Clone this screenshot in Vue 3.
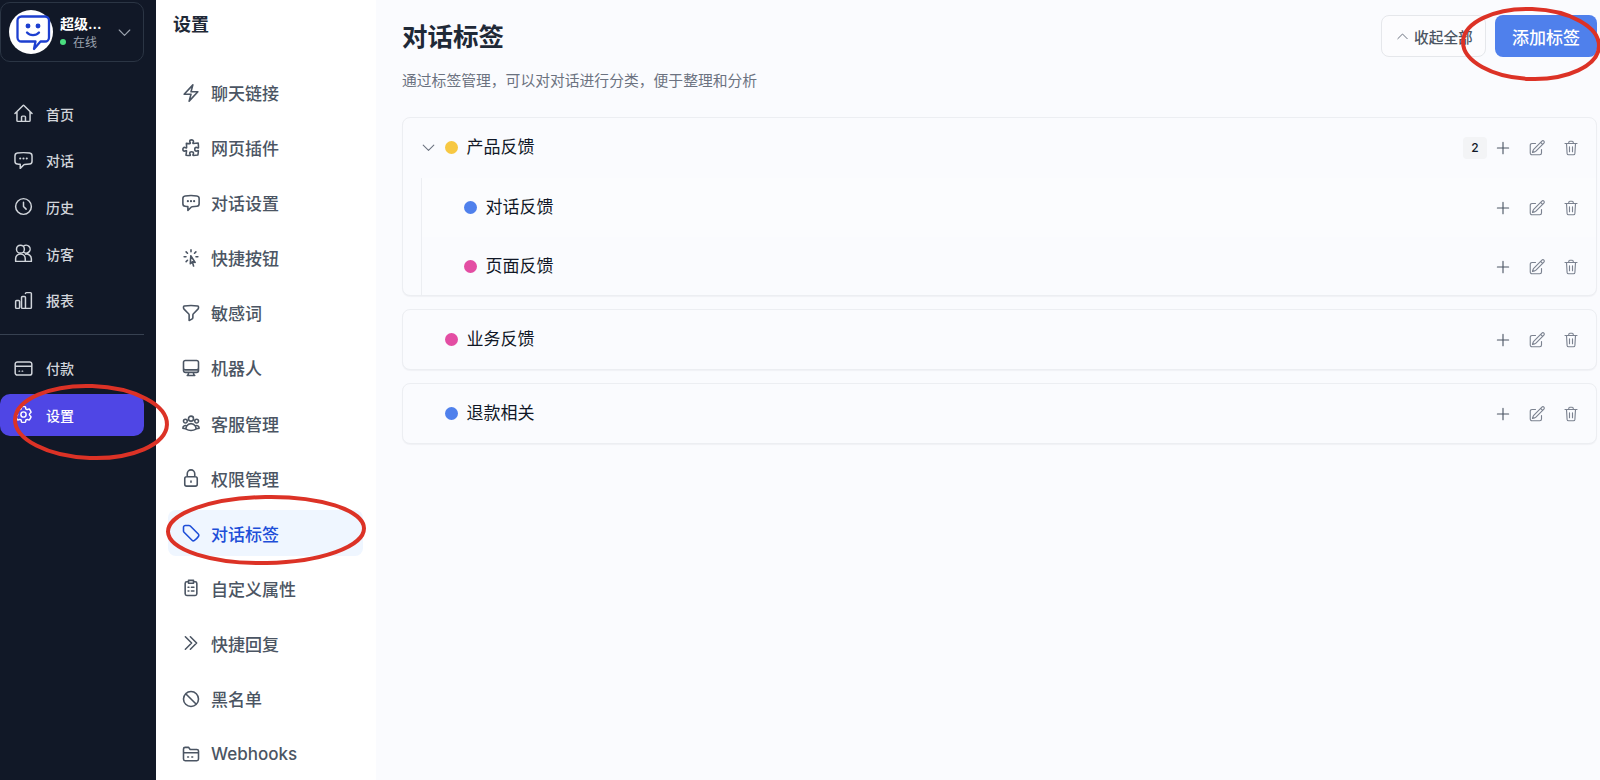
<template>
  <div class="app">
    <aside class="rail">
      <div class="account">
        <div class="avatar">
          <svg viewBox="0 0 44 44" width="44" height="44" fill="none" stroke="#1d3fd0" stroke-width="2.300" stroke-linecap="round" stroke-linejoin="round">
            <path d="M12.500 6.500h23.500a4 4 0 0 1 4 4v17a4 4 0 0 1-4 4h-4.500l-6.500 7.500 1.500-7.500H12.500a4 4 0 0 1-4-4v-17a4 4 0 0 1 4-4Z" />
            <path d="M18 22.500c3 3.500 9 3.500 12 0" />
            <circle cx="19" cy="16" r="1.300" fill="#1d3fd0" />
            <circle cx="29" cy="16" r="1.300" fill="#1d3fd0" />
          </svg>
        </div>
        <div class="account-text">
          <div class="account-name">超级...</div>
          <div class="account-status"><i class="online"></i>在线</div>
        </div>
        <svg class="account-arrow" viewBox="0 0 24 24" width="17" height="17" fill="none" stroke="currentColor" stroke-width="1.6" stroke-linecap="round" stroke-linejoin="round"><path :d="icons.chevronDown" /></svg>
      </div>

      <nav class="rail-nav">
        <a v-for="item in railTop" :key="item.label" class="rail-item">
          <svg viewBox="0 0 24 24" width="21" height="21" fill="none" stroke="currentColor" stroke-width="1.7" stroke-linecap="round" stroke-linejoin="round"><path :d="icons[item.icon]" /></svg>
          <span>{{ item.label }}</span>
        </a>
      </nav>
      <div class="rail-divider"></div>
      <nav class="rail-nav rail-nav-bottom">
        <a v-for="item in railBottom" :key="item.label" class="rail-item" :class="{ active: item.active }">
          <svg viewBox="0 0 24 24" width="21" height="21" fill="none" stroke="currentColor" stroke-width="1.7" stroke-linecap="round" stroke-linejoin="round"><path :d="icons[item.icon]" /></svg>
          <span>{{ item.label }}</span>
        </a>
      </nav>
    </aside>

    <aside class="settings">
      <div class="settings-title">设置</div>
      <nav class="settings-nav">
        <a v-for="item in settingsMenu" :key="item.label" class="settings-item" :class="{ active: item.active }">
          <svg viewBox="0 0 24 24" width="20" height="20" fill="none" stroke="currentColor" stroke-width="1.9" stroke-linecap="round" stroke-linejoin="round"><path :d="icons[item.icon]" /></svg>
          <span>{{ item.label }}</span>
        </a>
      </nav>
    </aside>

    <main class="content">
      <header class="content-head">
        <div>
          <h1>对话标签</h1>
          <p>通过标签管理，可以对对话进行分类，便于整理和分析</p>
        </div>
        <div class="head-actions">
          <button class="btn-ghost">
            <svg viewBox="0 0 24 24" width="15" height="15" fill="none" stroke="#6b7280" stroke-width="1.6" stroke-linecap="round" stroke-linejoin="round"><path :d="icons.chevronUp" /></svg>
            收起全部
          </button>
          <button class="btn-primary">添加标签</button>
        </div>
      </header>

      <section v-for="tag in tags" :key="tag.name" class="tag-card">
        <div class="tag-row">
          <span class="tag-toggle">
            <svg v-if="tag.children" viewBox="0 0 24 24" width="17" height="17" fill="none" stroke="#6b7280" stroke-width="1.5" stroke-linecap="round" stroke-linejoin="round"><path :d="icons.chevronDown" /></svg>
          </span>
          <i class="dot" :style="{ background: tag.color }"></i>
          <span class="tag-name">{{ tag.name }}</span>
          <span v-if="tag.children" class="tag-count">{{ tag.children.length }}</span>
          <div class="row-actions">
            <svg v-for="a in rowActions" :key="a" viewBox="0 0 24 24" width="18" height="18" fill="none" :stroke="a === 'plus' ? '#4b5563' : '#7b8290'" stroke-width="1.5" stroke-linecap="round" stroke-linejoin="round"><path :d="icons[a]" /></svg>
          </div>
        </div>
        <div v-if="tag.children" class="tag-children">
          <div v-for="child in tag.children" :key="child.name" class="tag-row child-row">
            <i class="dot" :style="{ background: child.color }"></i>
            <span class="tag-name">{{ child.name }}</span>
            <div class="row-actions">
              <svg v-for="a in rowActions" :key="a" viewBox="0 0 24 24" width="18" height="18" fill="none" :stroke="a === 'plus' ? '#4b5563' : '#7b8290'" stroke-width="1.5" stroke-linecap="round" stroke-linejoin="round"><path :d="icons[a]" /></svg>
            </div>
          </div>
        </div>
      </section>
    </main>

    <!-- 红色圈注，盖在页面上面 -->
    <svg class="marks" viewBox="0 0 1600 780" width="1600" height="780" fill="none" stroke="#dc3226" stroke-width="4">
      <ellipse cx="91" cy="422" rx="76" ry="36" transform="rotate(2 91 422)" />
      <ellipse cx="266" cy="530" rx="98" ry="33" transform="rotate(-1 266 530)" />
      <ellipse cx="1531" cy="44" rx="68" ry="35" transform="rotate(2 1531 44)" />
    </svg>
  </div>
</template>

<script setup>
const icons = {
  chevronDown: 'm4.5 8.5 7.5 7.5 7.5-7.5',
  chevronUp: 'm4.5 15.5 7.5-7.5 7.5 7.5',
  home: 'm2.25 12 8.954-8.955c.44-.439 1.152-.439 1.591 0L21.75 12M4.5 9.75v10.125c0 .621.504 1.125 1.125 1.125H9.75v-4.875c0-.621.504-1.125 1.125-1.125h2.25c.621 0 1.125.504 1.125 1.125V21h4.125c.621 0 1.125-.504 1.125-1.125V9.75M8.25 21h8.25',
  chat: 'M8.625 9.75a.375.375 0 1 1-.75 0 .375.375 0 0 1 .75 0Zm0 0H8.25m4.125 0a.375.375 0 1 1-.75 0 .375.375 0 0 1 .75 0Zm0 0H12m4.125 0a.375.375 0 1 1-.75 0 .375.375 0 0 1 .75 0Zm0 0h-.375m-13.5 3.01c0 1.6 1.123 2.994 2.707 3.227 1.087.16 2.185.283 3.293.369V21l4.184-4.183a1.14 1.14 0 0 1 .778-.332 48.294 48.294 0 0 0 5.83-.498c1.585-.233 2.708-1.626 2.708-3.228V6.741c0-1.602-1.123-2.995-2.707-3.228A48.394 48.394 0 0 0 12 3c-2.392 0-4.744.175-7.043.513C3.373 3.746 2.25 5.14 2.25 6.741v6.018Z',
  clock: 'M12 7v5l3 3M21 12a9 9 0 1 1-18 0 9 9 0 0 1 18 0Z',
  visitors: 'M8.500 2.500a4.500 4.500 0 1 1 0 9 4.500 4.500 0 0 1 0-9ZM12 3.700a4.500 4.500 0 1 1 0 6.600M3 21v-3a5.500 5.500 0 0 1 11 0v3ZM14.500 12.800a5.500 5.500 0 0 1 6.500 5.200v3h-7',
  chart: 'M3 13.125C3 12.504 3.504 12 4.125 12h2.25c.621 0 1.125.504 1.125 1.125v6.75C7.5 20.496 6.996 21 6.375 21h-2.25A1.125 1.125 0 0 1 3 19.875v-6.75ZM9.750 8.625c0-.621.504-1.125 1.125-1.125h2.25c.621 0 1.125.504 1.125 1.125v11.250c0 .621-.504 1.125-1.125 1.125h-2.250a1.125 1.125 0 0 1-1.125-1.125V8.625ZM14.250 4.125c0-.621.504-1.125 1.125-1.125h4.500C20.496 3 21 3.504 21 4.125v15.750c0 .621-.504 1.125-1.125 1.125h-5.625',
  card: 'M5 4.500h14a2.500 2.500 0 0 1 2.500 2.500v10a2.500 2.500 0 0 1-2.500 2.500H5A2.500 2.500 0 0 1 2.500 17V7A2.500 2.500 0 0 1 5 4.500ZM2.500 9.500h19M7 15h.5M10.500 15h.5',
  cog: 'M9.594 3.94c.09-.542.56-.94 1.11-.94h2.593c.55 0 1.02.398 1.11.94l.213 1.281c.063.374.313.686.645.87.074.04.147.083.22.127.325.196.72.257 1.075.124l1.217-.456a1.125 1.125 0 0 1 1.37.49l1.296 2.247a1.125 1.125 0 0 1-.26 1.431l-1.003.827c-.293.241-.438.613-.43.992a7.723 7.723 0 0 1 0 .255c-.008.378.137.75.43.991l1.004.827c.424.35.534.955.26 1.43l-1.298 2.247a1.125 1.125 0 0 1-1.369.491l-1.217-.456c-.355-.133-.75-.072-1.076.124a6.47 6.47 0 0 1-.22.128c-.331.183-.581.495-.644.869l-.213 1.281c-.09.543-.56.94-1.11.94h-2.594c-.55 0-1.019-.398-1.11-.94l-.213-1.281c-.062-.374-.312-.686-.644-.87a6.52 6.52 0 0 1-.22-.127c-.325-.196-.72-.257-1.076-.124l-1.217.456a1.125 1.125 0 0 1-1.369-.49l-1.297-2.247a1.125 1.125 0 0 1 .26-1.431l1.004-.827c.292-.24.437-.613.43-.991a6.932 6.932 0 0 1 0-.255c.007-.38-.138-.751-.43-.992l-1.004-.827a1.125 1.125 0 0 1-.26-1.43l1.297-2.247a1.125 1.125 0 0 1 1.37-.491l1.216.456c.356.133.751.072 1.076-.124.072-.044.146-.086.22-.128.332-.183.582-.495.644-.869l.214-1.28ZM15 12a3 3 0 1 1-6 0 3 3 0 0 1 6 0Z',
  bolt: 'm3.75 13.5 10.5-11.25L12 10.5h8.25L9.75 21.75 12 13.5H3.75Z',
  puzzle: 'M14.25 6.087c0-.355.186-.676.401-.959.221-.29.349-.634.349-1.003 0-1.036-1.007-1.875-2.25-1.875s-2.25.84-2.25 1.875c0 .369.128.713.349 1.003.215.283.401.604.401.959a.64.64 0 0 1-.657.643 48.39 48.39 0 0 1-4.163-.3c.186 1.613.293 3.25.315 4.907a.656.656 0 0 1-.658.663c-.355 0-.676-.186-.959-.401a1.647 1.647 0 0 0-1.003-.349c-1.036 0-1.875 1.007-1.875 2.25s.84 2.25 1.875 2.25c.369 0 .713-.128 1.003-.349.283-.215.604-.401.959-.401.31 0 .555.26.532.57a48.039 48.039 0 0 1-.642 5.056c1.518.19 3.058.309 4.616.354a.64.64 0 0 0 .657-.643c0-.355-.186-.676-.401-.959a1.647 1.647 0 0 1-.349-1.003c0-1.035 1.008-1.875 2.25-1.875 1.243 0 2.25.84 2.25 1.875 0 .369-.128.713-.349 1.003-.215.283-.4.604-.4.959 0 .333.277.599.61.58a48.1 48.1 0 0 0 5.427-.63 48.05 48.05 0 0 0 .582-4.717.532.532 0 0 0-.533-.57c-.355 0-.676.186-.959.401-.29.221-.634.349-1.003.349-1.035 0-1.875-1.007-1.875-2.25s.84-2.25 1.875-2.25c.37 0 .713.128 1.003.349.283.215.604.401.96.401a.656.656 0 0 0 .658-.663 48.422 48.422 0 0 0-.37-5.36c-1.886.342-3.81.574-5.766.689a.578.578 0 0 1-.61-.58Z',
  cursor: 'M15.042 21.672 13.684 16.6m0 0-2.51 2.225.569-9.47 5.227 7.917-3.286-.672ZM12 2.25V4.5m5.834.166-1.591 1.591M20.25 10.5H18M7.757 14.743l-1.59 1.59M6 10.5H3.75m4.007-4.243-1.59-1.59',
  funnel: 'M12 3c2.755 0 5.455.232 8.083.678.533.09.917.556.917 1.096v1.044a2.25 2.25 0 0 1-.659 1.591l-5.432 5.432a2.25 2.25 0 0 0-.659 1.591v2.927a2.25 2.25 0 0 1-1.244 2.013L9.75 21v-6.568a2.25 2.25 0 0 0-.659-1.591L3.659 7.409A2.25 2.25 0 0 1 3 5.818V4.774c0-.54.384-1.006.917-1.096A48.32 48.32 0 0 1 12 3Z',
  desktop: 'M9 17.25v1.007a3 3 0 0 1-.879 2.122L7.5 21h9l-.621-.621A3 3 0 0 1 15 18.257V17.25m6-12V15a2.25 2.25 0 0 1-2.25 2.25H5.25A2.25 2.25 0 0 1 3 15V5.25m18 0A2.25 2.25 0 0 0 18.75 3H5.25A2.25 2.25 0 0 0 3 5.25m18 0V12a2.25 2.25 0 0 1-2.25 2.25H5.25A2.25 2.25 0 0 1 3 12V5.25',
  group: 'M18 18.72a9.094 9.094 0 0 0 3.741-.479 3 3 0 0 0-4.682-2.72m.94 3.198.001.031c0 .225-.012.447-.037.666A11.944 11.944 0 0 1 12 21c-2.17 0-4.207-.576-5.963-1.584A6.062 6.062 0 0 1 6 18.719m12 0a5.971 5.971 0 0 0-.941-3.197m0 0A5.995 5.995 0 0 0 12 12.75a5.995 5.995 0 0 0-5.058 2.772m0 0a3 3 0 0 0-4.681 2.72 8.986 8.986 0 0 0 3.74.477m.94-3.197a5.971 5.971 0 0 0-.94 3.197M15 6.75a3 3 0 1 1-6 0 3 3 0 0 1 6 0Zm6 3a2.25 2.25 0 1 1-4.5 0 2.25 2.25 0 0 1 4.5 0Zm-13.5 0a2.25 2.25 0 1 1-4.5 0 2.25 2.25 0 0 1 4.5 0Z',
  lock: 'M16.5 10.5V6.75a4.5 4.5 0 1 0-9 0v3.75m-.75 11.25h10.5a2.25 2.25 0 0 0 2.25-2.25v-6.75a2.25 2.25 0 0 0-2.25-2.25H6.75a2.25 2.25 0 0 0-2.25 2.25v6.75a2.25 2.25 0 0 0 2.25 2.25ZM12 15.5v1.5',
  tag: 'M9.568 3H5.25A2.25 2.25 0 0 0 3 5.25v4.318c0 .597.237 1.17.659 1.591l9.581 9.581c.699.699 1.78.872 2.607.33a18.095 18.095 0 0 0 5.223-5.223c.542-.827.369-1.908-.33-2.607L11.16 3.66A2.25 2.25 0 0 0 9.568 3Z',
  clipboard: 'M8.500 4.500H7A2 2 0 0 0 5 6.500V19a2 2 0 0 0 2 2h10a2 2 0 0 0 2-2V6.500a2 2 0 0 0-2-2h-1.500M9 2.800h6v3.400H9ZM8.500 11h1M12.500 11h3M8.500 15.500h1M12.500 15.500h3',
  doubleRight: 'm5.25 4.5 7.5 7.5-7.5 7.5m6-15 7.5 7.5-7.5 7.5',
  ban: 'M18.364 18.364A9 9 0 0 0 5.636 5.636m12.728 12.728A9 9 0 0 1 5.636 5.636m12.728 12.728L5.636 5.636',
  folder: 'M3 6a2 2 0 0 1 2-2h4l2 2.500h8a2 2 0 0 1 2 2V18a2 2 0 0 1-2 2H5a2 2 0 0 1-2-2ZM3 10.500h18M8 15.500h1M13 15.500h1',
  plus: 'M12 4.5v15m7.5-7.5h-15',
  edit: 'm16.862 4.487 1.687-1.688a1.875 1.875 0 1 1 2.652 2.652L10.582 16.07a4.5 4.5 0 0 1-1.897 1.13L6 18l.8-2.685a4.5 4.5 0 0 1 1.13-1.897l8.932-8.931Zm0 0L19.5 7.125M18 14v4.75A2.25 2.25 0 0 1 15.75 21H5.25A2.25 2.25 0 0 1 3 18.75V8.25A2.25 2.25 0 0 1 5.25 6H10',
  trash: 'M4 6h16M9 6V4.500A1.500 1.500 0 0 1 10.500 3h3A1.500 1.500 0 0 1 15 4.500V6M6 6l.8 13.200A2 2 0 0 0 8.800 21h6.400a2 2 0 0 0 2-1.800L18 6M10 10.500v6.500M14 10.500v6.500'
}

const railTop = [
  { label: '首页', icon: 'home' },
  { label: '对话', icon: 'chat' },
  { label: '历史', icon: 'clock' },
  { label: '访客', icon: 'visitors' },
  { label: '报表', icon: 'chart' }
]

const railBottom = [
  { label: '付款', icon: 'card' },
  { label: '设置', icon: 'cog', active: true }
]

const settingsMenu = [
  { label: '聊天链接', icon: 'bolt' },
  { label: '网页插件', icon: 'puzzle' },
  { label: '对话设置', icon: 'chat' },
  { label: '快捷按钮', icon: 'cursor' },
  { label: '敏感词', icon: 'funnel' },
  { label: '机器人', icon: 'desktop' },
  { label: '客服管理', icon: 'group' },
  { label: '权限管理', icon: 'lock' },
  { label: '对话标签', icon: 'tag', active: true },
  { label: '自定义属性', icon: 'clipboard' },
  { label: '快捷回复', icon: 'doubleRight' },
  { label: '黑名单', icon: 'ban' },
  { label: 'Webhooks', icon: 'folder' }
]

const rowActions = ['plus', 'edit', 'trash']

const tags = [
  {
    name: '产品反馈',
    color: '#f7c843',
    children: [
      { name: '对话反馈', color: '#4f80ec' },
      { name: '页面反馈', color: '#e34da3' }
    ]
  },
  { name: '业务反馈', color: '#e34da3' },
  { name: '退款相关', color: '#4f80ec' }
]
</script>

<style>
html, body { margin: 0; overflow: hidden; }
</style>

<style scoped>
.app {
  position: relative;
  display: flex;
  width: 1600px;
  height: 780px;
  overflow: hidden;
  font-family: Inter, "Noto Sans CJK SC", sans-serif;
  background: #fafbfe;
}

/* 左侧深色导航 */
.rail {
  width: 156px;
  flex: none;
  box-sizing: border-box;
  padding: 2px 12px 0 0;
  background: #111827;
  color: #d1d5db;
}
.account {
  display: flex;
  align-items: center;
  height: 60px;
  box-sizing: border-box;
  padding: 0 10px 0 8px;
  border: 1px solid #2b3544;
  border-radius: 10px;
}
.avatar {
  width: 44px;
  height: 44px;
  flex: none;
  border-radius: 50%;
  background: #fff;
}
.account-text { margin-left: 7px; flex: 1; min-width: 0; }
.account-name { font-size: 14px; font-weight: 600; line-height: 20px; color: #fff; }
.account-status { display: flex; align-items: center; font-size: 12px; line-height: 17px; color: #9ca3af; }
.online {
  width: 6px;
  height: 6px;
  margin-right: 7px;
  border-radius: 50%;
  background: #4ade80;
}
.account-arrow { flex: none; color: #9ca3af; }
.rail-nav {
  display: flex;
  flex-direction: column;
  gap: 4.7px;
  margin-top: 30.5px;
}
.rail-nav-bottom { margin-top: 12px; }
.rail-item {
  display: flex;
  align-items: center;
  gap: 12px;
  height: 42px;
  padding-left: 13px;
  border-radius: 10px;
  font-size: 14px;
  font-weight: 500;
}
.rail-item.active { background: #4f46e5; color: #fff; }
.rail-divider { height: 1px; margin-top: 13px; background: #374151; }

/* 设置菜单 */
.settings {
  width: 220px;
  flex: none;
  box-sizing: border-box;
  padding: 0 13px 0 12px;
  background: #fff;
}
.settings-title {
  padding: 11px 0 0 5px;
  font-size: 18px;
  font-weight: 600;
  line-height: 28px;
  color: #1f2937;
}
.settings-nav { margin-top: 30.5px; display: flex; flex-direction: column; gap: 9.1px; }
.settings-item {
  display: flex;
  align-items: center;
  gap: 10px;
  height: 46px;
  flex: none;
  padding-left: 13px;
  border-radius: 8px;
  font-size: 17px;
  font-weight: 500;
  color: #4b5563;
}
.settings-item.active { background: #eff6ff; color: #1d4ed8; }

/* 右侧内容 */
.content {
  flex: 1;
  min-width: 0;
  padding: 15px 3px 0 26px;
}
.content-head {
  display: flex;
  justify-content: space-between;
  align-items: flex-start;
  height: 102px;
}
h1 {
  margin: 6px 0 0;
  font-size: 25.500px;
  font-weight: 700;
  line-height: 32px;
  color: #1f2937;
}
.content-head p {
  margin: 17px 0 0;
  font-size: 14.800px;
  line-height: 22px;
  color: #6b7280;
}
.head-actions { display: flex; gap: 9px; }
.btn-ghost, .btn-primary {
  display: flex;
  align-items: center;
  height: 42px;
  box-sizing: border-box;
  border-radius: 8px;
  font-family: inherit;
  font-weight: 500;
  white-space: nowrap;
}
.btn-ghost {
  gap: 4px;
  width: 105px;
  padding: 0 0 0 13px;
  border: 1px solid #e5e7eb;
  background: #fcfcfe;
  font-size: 14.700px;
  color: #4b5563;
}
.btn-primary {
  justify-content: center;
  width: 102px;
  padding: 0;
  border: 0;
  background: #4f80ec;
  font-size: 17px;
  color: #fff;
}
.tag-card {
  margin-bottom: 13px;
  border: 1px solid #eceef2;
  border-radius: 8px;
  background: #fafbfe;
  box-shadow: 0 1px 1px rgba(17, 24, 39, 0.04);
}
.tag-row {
  display: flex;
  align-items: center;
  height: 59px;
  padding: 0 16px 0 17px;
}
.tag-toggle { display: flex; width: 17px; margin-right: 8px; }
.dot {
  width: 13px;
  height: 13px;
  flex: none;
  border-radius: 50%;
}
.tag-name {
  margin-left: 8.500px;
  margin-top: -1px;
  flex: 1;
  font-size: 17px;
  font-weight: 400;
  line-height: 22px;
  color: #111827;
}
.tag-count {
  display: flex;
  align-items: center;
  justify-content: center;
  width: 24px;
  height: 22px;
  margin-right: 7px;
  border-radius: 4px;
  background: #f3f4f6;
  font-size: 12px;
  font-weight: 500;
  color: #111827;
}
.row-actions { display: flex; gap: 16px; }
.tag-children {
  margin: 1px 0 -1px 18px;
  border-left: 1px solid #eceef2;
}
.child-row { padding-left: 42px; padding-right: 16px; }
.child-row:first-child { background: #fbfcfe; }

.marks {
  position: absolute;
  top: 0;
  left: 0;
  pointer-events: none;
}
</style>
